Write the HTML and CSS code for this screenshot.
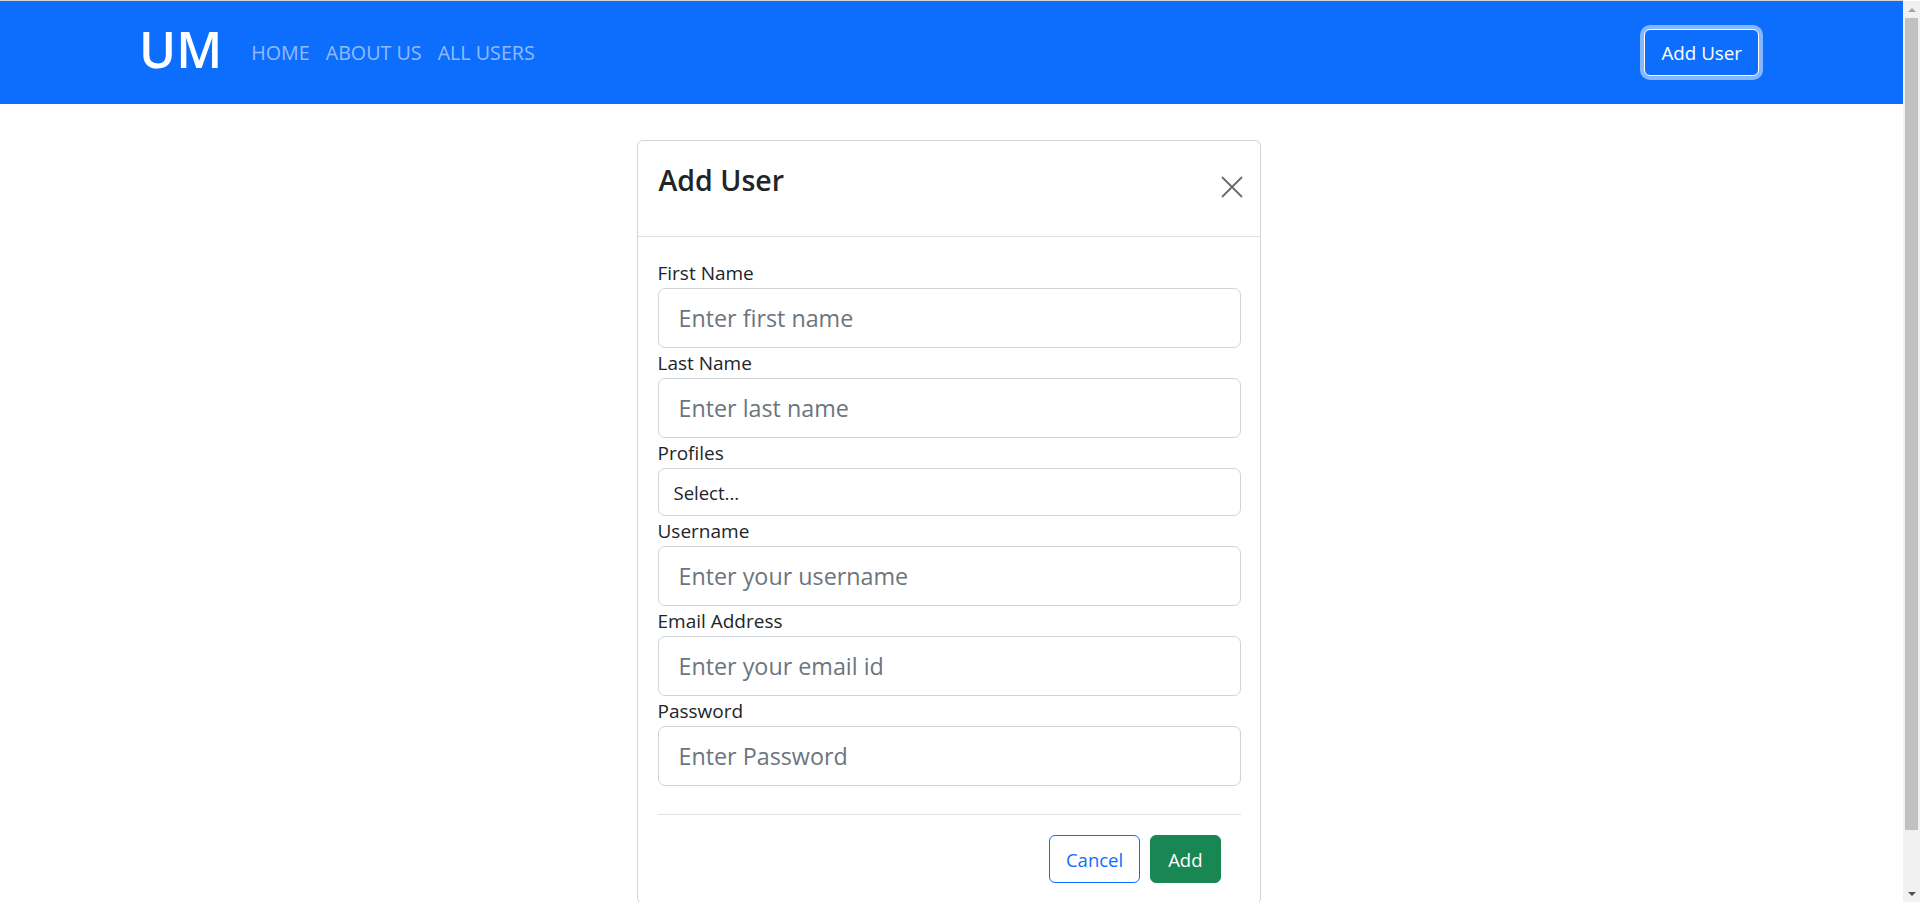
FILE: index.html
```html
<!DOCTYPE html>
<html lang="en">
<head>
<meta charset="utf-8">
<title>User Management</title>
<link rel="stylesheet" href="styles.css">
</head>
<body>
<nav class="navbar">
  <div class="nav-inner">
    <a class="brand" href="#">UM</a>
    <ul class="nav-links">
      <li><a href="#">HOME</a></li>
      <li><a href="#">ABOUT US</a></li>
      <li><a href="#">ALL USERS</a></li>
    </ul>
    <button class="btn-add-user" type="button">Add User</button>
  </div>
</nav>
<main class="page">
  <section class="card">
    <header class="card-header">
      <h3 class="card-title">Add User</h3>
      <button class="btn-close" type="button" aria-label="Close">
        <svg viewBox="0 0 22 22" width="22" height="22"><path d="M1 1 L21 21 M21 1 L1 21" stroke="#6c6c6c" stroke-width="1.9" fill="none"/></svg>
      </button>
    </header>
    <form class="card-body">
      <div class="field">
        <label class="field-label">First Name</label>
        <input class="field-input" type="text" placeholder="Enter first name">
      </div>
      <div class="field">
        <label class="field-label">Last Name</label>
        <input class="field-input" type="text" placeholder="Enter last name">
      </div>
      <div class="field">
        <label class="field-label">Profiles</label>
        <select class="field-select"><option>Select...</option></select>
      </div>
      <div class="field">
        <label class="field-label">Username</label>
        <input class="field-input" type="text" placeholder="Enter your username">
      </div>
      <div class="field">
        <label class="field-label">Email Address</label>
        <input class="field-input" type="email" placeholder="Enter your email id">
      </div>
      <div class="field">
        <label class="field-label">Password</label>
        <input class="field-input" type="password" placeholder="Enter Password">
      </div>
      <div class="card-footer">
        <button class="btn btn-outline" type="button">Cancel</button>
        <button class="btn btn-success" type="button">Add</button>
      </div>
    </form>
  </section>
</main>
<div class="scrollbar" aria-hidden="true">
  <div class="sb-arrow"><span class="sb-up"></span></div>
  <div class="sb-thumb"></div>
  <div class="sb-arrow"><span class="sb-down"></span></div>
</div>
</body>
</html>
```
FILE: styles.css
```css
body {
  margin: 0 17px 0 0;
  border-top: 1px solid #d4d4d4;
  background: #fff;
  color: #212529;
  font-family: "Open Sans", "Noto Sans", "DejaVu Sans", sans-serif;
}
.navbar {
  background: #0d6efd;
  height: 103px;
  display: flex;
  align-items: center;
}
.nav-inner {
  flex: 1;
  display: flex;
  align-items: center;
  padding: 0 144px 0 139px;
}
.brand {
  color: #fff;
  text-decoration: none;
  font-size: 50px;
  font-weight: 600;
  line-height: 1;
  margin-top: -8px;
  margin-right: 21px;
}
.nav-links {
  list-style: none;
  margin: 0;
  padding: 0;
  display: flex;
}
.nav-links a {
  display: block;
  padding: 0 8px;
  color: rgba(255, 255, 255, 0.55);
  text-decoration: none;
  font-size: 19.7px;
  line-height: 30px;
}
.btn-add-user {
  margin-left: auto;
  height: 47px;
  padding: 0 16px;
  background: #0d6efd;
  color: #fff;
  border: 1px solid #fff;
  border-radius: 6px;
  box-shadow: 0 0 0 4px rgba(255, 255, 255, 0.5);
  font-family: inherit;
  font-size: 18.8px;
}
.page {
  padding: 36px 6px 40px 0;
}
.card {
  width: 624px;
  box-sizing: border-box;
  margin: 0 auto;
  border: 1px solid #d3d3d3;
  border-radius: 6px;
}
.card-header {
  height: 95px;
  display: flex;
  justify-content: space-between;
  align-items: flex-start;
  padding: 0 17px 0 21px;
  border-bottom: 1px solid #dee2e6;
}
.card-title {
  margin: 19px 0 0;
  font-size: 28.5px;
  font-weight: 600;
  line-height: 40px;
}
.btn-close {
  margin-top: 35px;
  padding: 0;
  border: 0;
  background: none;
  width: 22px;
  height: 22px;
}
.btn-close svg {
  display: block;
}
.card-body {
  padding: 21px 19px 20px 20px;
}
.field-label {
  display: block;
  font-size: 19px;
  line-height: 30px;
}
.field-input {
  display: block;
  width: 100%;
  box-sizing: border-box;
  height: 60px;
  padding: 0 20px;
  border: 1px solid #ced4da;
  border-radius: 7px;
  font-family: inherit;
  font-size: 23.3px;
  color: #212529;
}
.field-input::placeholder {
  color: #6c757d;
}
.field-select {
  display: block;
  width: 100%;
  box-sizing: border-box;
  height: 48px;
  padding: 0 15px;
  border: 1px solid #ced4da;
  border-radius: 7px;
  appearance: none;
  background: #fff;
  font-family: inherit;
  font-size: 18.5px;
  color: #212529;
}
.card-footer {
  margin-top: 28px;
  border-top: 1px solid #dee2e6;
  padding: 20px 20px 0 0;
  display: flex;
  justify-content: flex-end;
  gap: 10px;
}
.btn {
  height: 48px;
  padding: 0 16px;
  border-radius: 6px;
  font-family: inherit;
  font-size: 18.5px;
  border: 1px solid transparent;
}
.btn-outline {
  background: #fff;
  color: #0d6efd;
  border-color: #0d6efd;
}
.btn-success {
  background: #198754;
  color: #fff;
  border-color: #198754;
  padding: 0 17px;
}
.scrollbar {
  position: fixed;
  top: 1px;
  right: 0;
  bottom: 0;
  width: 17px;
  background: #f1f1f1;
  display: flex;
  flex-direction: column;
  align-items: center;
}
.sb-arrow {
  height: 17px;
  width: 17px;
  display: flex;
  align-items: center;
  justify-content: center;
}
.sb-up {
  border-left: 4px solid transparent;
  border-right: 4px solid transparent;
  border-bottom: 4px solid #a3a3a3;
}
.sb-down {
  border-left: 4px solid transparent;
  border-right: 4px solid transparent;
  border-top: 4px solid #505050;
}
.sb-thumb {
  flex: 1;
  width: 13px;
  margin-bottom: 55px;
  background: #c1c1c1;
}
```
